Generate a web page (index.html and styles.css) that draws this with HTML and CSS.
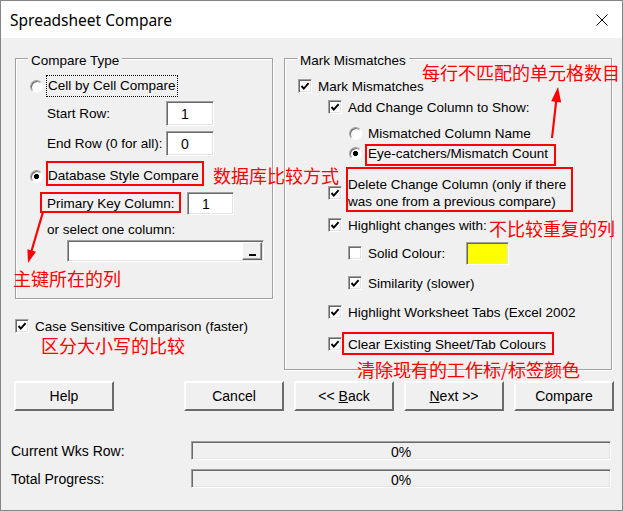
FILE: index.html
```html
<!DOCTYPE html>
<html lang="zh-CN">
<head>
    <meta charset="UTF-8">
    <title>Spreadsheet Compare</title>
    <link rel="stylesheet" href="styles.css">
</head>
<body>
<div class="window">
    <div class="titlebar">
        <span class="title">Spreadsheet Compare</span>
        <svg class="close" viewBox="0 0 12 12"><path d="M0.5 0.5 11.5 11.5 M11.5 0.5 0.5 11.5"/></svg>
    </div>

    <div class="content">
        <div class="top">
            <div class="left">
                <div class="frame frame-type">
                    <span class="legend">Compare Type</span>
                    <div class="opt"><span class="radio"></span><span class="opt-text focus">Cell by Cell Compare</span></div>
                    <div class="field-row fr-start"><span class="field-label">Start Row:</span><span class="field">1</span></div>
                    <div class="field-row fr-end"><span class="field-label">End Row (0 for all):</span><span class="field">0</span></div>
                    <div class="opt opt-db"><span class="radio on"></span><span class="opt-text">Database Style Compare</span></div>
                    <div class="field-row fr-key"><span class="field-label">Primary Key Column:</span><span class="field">1</span></div>
                    <div class="hint">or select one column:</div>
                    <div class="combo"><span class="combo-btn"><i></i></span></div>
                </div>
                <div class="chk case"><span class="box"><svg viewBox="0 0 12 12"><path d="M2.5 6 4.8 8.6 9.6 3.2"/></svg></span>Case Sensitive Comparison (faster)</div>
            </div>

            <div class="frame frame-mark">
                <span class="legend">Mark Mismatches</span>
                <div class="chk l1"><span class="box"><svg viewBox="0 0 12 12"><path d="M2.5 6 4.8 8.6 9.6 3.2"/></svg></span>Mark Mismatches</div>
                <div class="chk l2 m-add"><span class="box"><svg viewBox="0 0 12 12"><path d="M2.5 6 4.8 8.6 9.6 3.2"/></svg></span>Add Change Column to Show:</div>
                <div class="chk r3 m-name"><span class="radio"></span>Mismatched Column Name</div>
                <div class="chk r3 m-eye"><span class="radio on"></span>Eye-catchers/Mismatch Count</div>
                <div class="chk l2 m-del"><span class="box"><svg viewBox="0 0 12 12"><path d="M2.5 6 4.8 8.6 9.6 3.2"/></svg></span><span class="two-lines">Delete Change Column (only if there<br>was one from a previous compare)</span></div>
                <div class="chk l2 m-hl"><span class="box"><svg viewBox="0 0 12 12"><path d="M2.5 6 4.8 8.6 9.6 3.2"/></svg></span>Highlight changes with:</div>
                <div class="chk l3 m-solid"><span class="box"></span><span class="solid-label">Solid Colour:</span><span class="swatch"></span></div>
                <div class="chk l3 m-sim"><span class="box"><svg viewBox="0 0 12 12"><path d="M2.5 6 4.8 8.6 9.6 3.2"/></svg></span>Similarity (slower)</div>
                <div class="chk l2 m-tabs"><span class="box"><svg viewBox="0 0 12 12"><path d="M2.5 6 4.8 8.6 9.6 3.2"/></svg></span>Highlight Worksheet Tabs (Excel 2002</div>
                <div class="chk l2 m-clear"><span class="box"><svg viewBox="0 0 12 12"><path d="M2.5 6 4.8 8.6 9.6 3.2"/></svg></span>Clear Existing Sheet/Tab Colours</div>
            </div>
        </div>

        <div class="buttons">
            <button class="btn btn-help">Help</button>
            <button class="btn">Cancel</button>
            <button class="btn">&lt;&lt; <u>B</u>ack</button>
            <button class="btn"><u>N</u>ext &gt;&gt;</button>
            <button class="btn">Compare</button>
        </div>

        <div class="progress">
            <div class="prog-row"><span class="prog-label">Current Wks Row:</span><span class="bar">0%</span></div>
            <div class="prog-row"><span class="prog-label">Total Progress:</span><span class="bar">0%</span></div>
        </div>
    </div>

    <!-- annotations drawn over the dialog -->
    <div class="notes">
        <span class="mark mk-db"></span>
        <span class="mark mk-key"></span>
        <span class="mark mk-eye"></span>
        <span class="mark mk-del"></span>
        <span class="mark mk-clear"></span>
        <span class="note n-db">数据库比较方式</span>
        <span class="note n-key">主键所在的列</span>
        <span class="note n-case">区分大小写的比较</span>
        <span class="note n-count">每行不匹配的单元格数目</span>
        <span class="note n-dup">不比较重复的列</span>
        <span class="note n-clear">清除现有的工作标/标签颜色</span>
        <svg class="arrows" viewBox="0 0 623 511">
            <line x1="43" y1="212" x2="31.5" y2="251"/>
            <polygon points="28,263 36,251.8 27.4,249.2"/>
            <line x1="552" y1="138" x2="556.2" y2="101"/>
            <polygon points="558,87 561.2,102.5 551.2,101.3"/>
        </svg>
    </div>
</div>
</body>
</html>
```

FILE: styles.css
```css
body { margin: 0; background: #f0f0f0; font-family: "Liberation Sans", Arial, sans-serif; font-size: 13.5px; color: #000; }
.window { position: relative; width: 623px; height: 511px; box-sizing: border-box; border: 1px solid #858585; background: #f0f0f0; overflow: hidden; }

.titlebar { height: 37px; background: #fff; display: flex; align-items: center; justify-content: space-between; padding: 0 14px 0 9px; }
.title { font-family: "Noto Sans", "Open Sans", sans-serif; font-size: 15.5px; }
.close { width: 12px; height: 12px; stroke: #000; stroke-width: 1; fill: none; }

.content { padding-top: 20px; }
.top { display: flex; align-items: flex-start; gap: 11px; margin-left: 14px; }
.left { width: 258px; }

.frame { position: relative; box-sizing: border-box; border: 1px solid #a0a0a0; box-shadow: inset 1px 1px 0 #fff, 1px 1px 0 #fff; }
.frame-type { height: 241px; padding-top: 16px; }
.frame-mark { width: 328px; height: 312px; padding-top: 19px; }
.legend { position: absolute; top: -7px; left: 12px; padding: 0 3px; background: #f0f0f0; line-height: 18px; }

/* sunken controls */
.radio, .box, .field, .combo, .swatch, .bar { box-sizing: border-box; border: 1px solid; border-color: #a0a0a0 #fff #fff #a0a0a0; box-shadow: inset 1px 1px 0 #696969, inset -1px -1px 0 #e3e3e3; }
.radio { width: 13px; height: 13px; flex: none; border-radius: 50%; box-shadow: inset 1px 1px 0 #696969; background: #fff; }
.radio.on { background: radial-gradient(circle, #000 2.3px, #fff 2.9px); }
.box { width: 14px; height: 14px; flex: none; background: #fff; margin-right: 6px; display: flex; }
.box svg { width: 12px; height: 12px; fill: none; stroke: #000; stroke-width: 1.9; }

.opt { display: flex; align-items: center; height: 22px; margin-left: 14px; }
.opt-text { margin-left: 3px; padding: 0 1px; border: 1px dotted transparent; line-height: 20px; }
.focus { border-color: #000; }
.opt-db { margin-top: 9px; }

.field-row { display: flex; align-items: center; margin-left: 31px; }
.field-label { width: 119px; }
.field { width: 48px; height: 25px; background: #fff; padding-left: 14px; display: flex; align-items: center; font-size: 14px; }
.fr-start { margin-top: 4px; }
.fr-end { margin-top: 5px; }
.fr-key { margin-top: 5px; }
.fr-key .field-label { width: 140px; }
.fr-key .field { width: 47px; height: 23px; }
.hint { margin: 7px 0 0 31px; line-height: 16px; }

.combo { width: 197px; height: 22px; margin: 2px 0 0 51px; background: #fff; display: flex; justify-content: flex-end; align-items: center; padding-right: 1px; }
.combo-btn { box-sizing: border-box; width: 20px; height: 18px; background: #f0f0f0; border: 1px solid; border-color: #fff #696969 #696969 #fff; box-shadow: inset -1px -1px 0 #a0a0a0; display: flex; justify-content: center; align-items: flex-end; padding-bottom: 3px; }
.combo-btn i { width: 7px; height: 2px; background: #000; }

.chk { display: flex; align-items: center; height: 16px; }
.case { margin-top: 19px; }
.l1 { margin-left: 13px; }
.l2 { margin-left: 43px; }
.l3 { margin-left: 63px; }
.r3 { margin-left: 64px; }
.r3 .radio { margin-right: 6px; }
.m-add { margin-top: 5px; }
.m-name { margin-top: 10px; }
.m-eye { margin-top: 4px; }
.m-del { margin-top: 15px; height: 34px; }
.two-lines { line-height: 17px; }
.m-hl { margin-top: 7px; }
.m-solid { margin-top: 8px; height: 24px; }
.solid-label { width: 98px; }
.swatch { width: 43px; height: 23px; background: #ffff00; }
.m-sim { margin-top: 10px; }
.m-tabs { margin-top: 13px; }
.m-clear { margin-top: 16px; }

.buttons { display: flex; gap: 10px; margin: 11px 0 0 13px; }
.btn { box-sizing: border-box; width: 100px; height: 30px; padding: 0; background: #f0f0f0; border: 2px solid; border-color: #fff #6b6b6b #6b6b6b #fff; font-family: "Liberation Sans", Arial, sans-serif; font-size: 14px; color: #000; }
.btn-help { margin-right: 60px; }

.progress { margin: 30px 0 0 10px; }
.prog-row { display: flex; align-items: center; height: 19px; }
.prog-row + .prog-row { margin-top: 9px; }
.prog-label { width: 180px; font-size: 14px; }
.bar { width: 420px; height: 19px; display: flex; justify-content: center; align-items: center; padding-top: 3px; font-size: 14px; }

.notes { position: absolute; left: -1px; top: -1px; width: 623px; height: 511px; pointer-events: none; }
.mark { position: absolute; box-sizing: border-box; border: 2px solid #f00; }
.mk-db { left: 46px; top: 161px; width: 158px; height: 25px; }
.mk-key { left: 40px; top: 192px; width: 141px; height: 21px; }
.mk-eye { left: 365px; top: 144px; width: 191px; height: 22px; }
.mk-del { left: 346px; top: 167px; width: 227px; height: 45px; }
.mk-clear { left: 342px; top: 332px; width: 212px; height: 23px; }
.note { position: absolute; color: #f00; font-family: "Noto Sans CJK SC", sans-serif; font-size: 18px; line-height: 18px; white-space: nowrap; }
.n-db { left: 213px; top: 166px; }
.n-key { left: 13px; top: 269px; }
.n-case { left: 41px; top: 336px; }
.n-count { left: 422px; top: 63px; }
.n-dup { left: 489px; top: 219px; }
.n-clear { left: 357px; top: 360px; }
.arrows { position: absolute; left: 0; top: 0; width: 623px; height: 511px; }
.arrows line { stroke: #f00; stroke-width: 2.2; }
.arrows polygon { fill: #f00; }
```
